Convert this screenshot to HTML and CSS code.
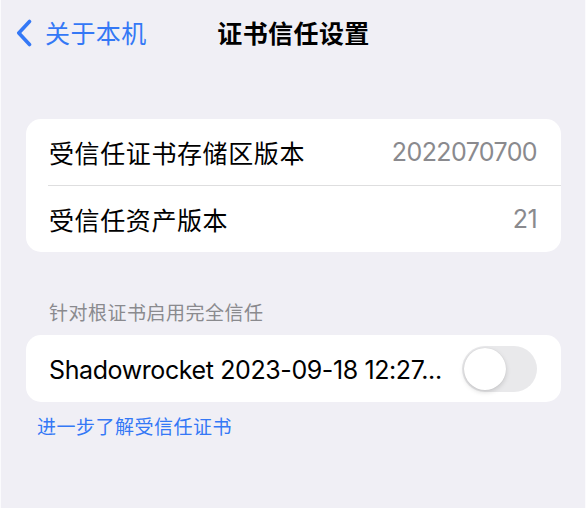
FILE: index.html
```html
<!DOCTYPE html>
<html lang="zh-CN">
<head>
<meta charset="utf-8">
<title>证书信任设置</title>
<link rel="stylesheet" href="styles.css">
</head>
<body>
<div class="page">
  <header class="nav">
    <a class="back" href="#">
      <svg class="chev" width="18" height="28" viewBox="0 0 18 28"><path d="M14.5 2.5 L3.8 14 L14.5 25.5" fill="none" stroke="#3478f6" stroke-width="3.6" stroke-linecap="round" stroke-linejoin="round"/></svg>
      <span>关于本机</span>
    </a>
    <h1 class="title">证书信任设置</h1>
    <div></div>
  </header>

  <section class="card first">
    <div class="row">
      <span class="label">受信任证书存储区版本</span>
      <span class="value">2022070700</span>
    </div>
    <div class="divider"></div>
    <div class="row">
      <span class="label">受信任资产版本</span>
      <span class="value">21</span>
    </div>
  </section>

  <div class="section-header">针对根证书启用完全信任</div>
  <section class="card">
    <div class="row toggle-row">
      <span class="label latin">Shadowrocket 2023-09-18 12:27...</span>
      <span class="switch"><span class="knob"></span></span>
    </div>
  </section>
  <a class="link" href="#">进一步了解受信任证书</a>
</div>
</body>
</html>
```

FILE: styles.css
```css
html, body {
  margin: 0;
  padding: 0;
  background: #f0eff5;
}
body {
  font-family: "Inter", "Noto Sans CJK SC", sans-serif;
  color: #000;
}
.page {
  box-sizing: border-box;
  width: 586px;
  height: 508px;
  border-left: 1px solid #fbfbfd;
  border-right: 1px solid #fbfbfd;
  padding: 0 24px 0 25px;
  overflow: hidden;
}
.nav {
  height: 63px;
  padding-bottom: 5px;
  display: grid;
  grid-template-columns: 1fr auto 1fr;
  align-items: center;
  margin: 0 -24px 0 -25px;
}
.back {
  display: flex;
  align-items: center;
  text-decoration: none;
  color: #3478f6;
  font-size: 25px;
  padding-left: 14px;
}
.back span {
  margin-left: 12px;
  letter-spacing: 0.4px;
}
.chev {
  display: block;
  margin-top: 3px;
}
.title {
  margin: 0;
  font-size: 25px;
  font-weight: 600;
  letter-spacing: 0.4px;
  padding-left: 1px;
}
.card {
  background: #fff;
  border-radius: 15px;
  overflow: hidden;
}
.card.first {
  margin-top: 51px;
}
.row {
  height: 66px;
  display: flex;
  align-items: center;
  justify-content: space-between;
  padding: 0 24px 0 23px;
}
.label {
  font-size: 25px;
  letter-spacing: 0.6px;
}
.label.latin {
  letter-spacing: -0.4px;
}
.value {
  font-size: 25px;
  color: #8a8a8e;
  letter-spacing: -0.6px;
}
.divider {
  height: 1px;
  background: #dededf;
  margin-left: 22px;
}
.section-header {
  font-size: 19px;
  line-height: 23px;
  color: #8a8a8e;
  letter-spacing: 0.5px;
  padding: 50px 0 0 23px;
  height: 33px;
}
.toggle-row {
  height: 67px;
}
.toggle-row .label {
  padding-top: 3px;
}
.switch {
  width: 75px;
  height: 46px;
  border-radius: 23px;
  background: #e9e9eb;
  position: relative;
  flex: none;
}
.knob {
  position: absolute;
  left: 2px;
  top: 2px;
  width: 42px;
  height: 42px;
  border-radius: 50%;
  background: #fff;
  box-shadow: 0 2px 5px rgba(0,0,0,0.15), 0 0 1px rgba(0,0,0,0.12);
}
.link {
  display: block;
  margin: 14px 0 0 11px;
  font-size: 19px;
  line-height: 23px;
  letter-spacing: 0.5px;
  color: #3478f6;
  text-decoration: none;
}
```
